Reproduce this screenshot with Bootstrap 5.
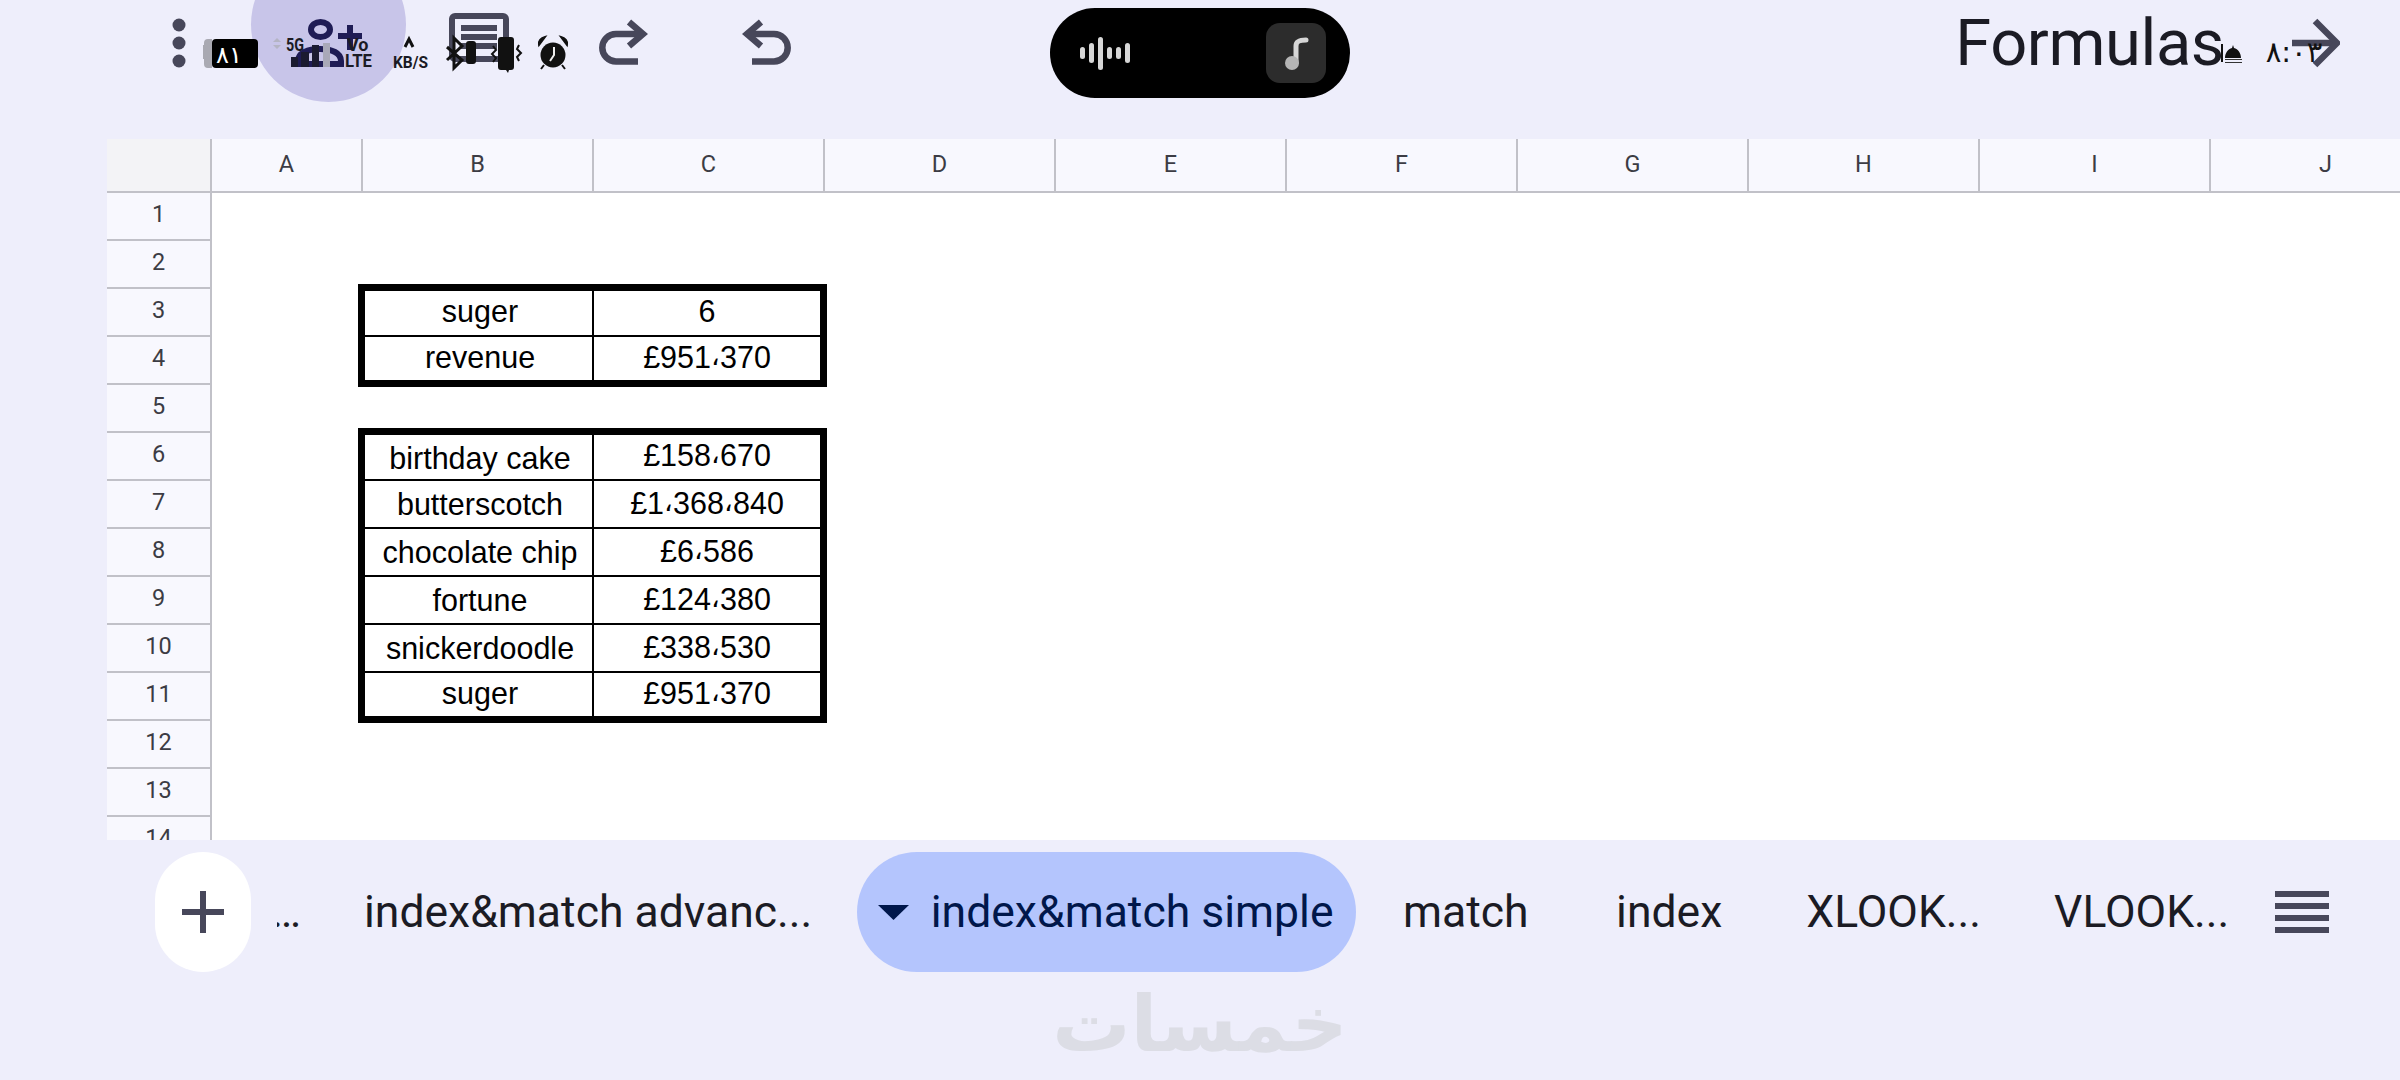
<!DOCTYPE html>
<html lang="en">
<head>
  <meta charset="UTF-8" />
  <title>Formulas</title>
  <link href="https://cdn.jsdelivr.net/npm/bootstrap@5.3.0/dist/css/bootstrap.min.css" rel="stylesheet">
  <style>
    body {
      width: 2400px;
      height: 1080px;
      overflow: hidden;
      background-color: #eeeefb;
      font-family: Roboto, sans-serif;
      color: #1b1b24;
    }

    /* top bar */
    .top-bar {
      height: 139px;
      padding-left: 107px;
    }
    .tool-btn {
      --bs-btn-padding-x: 0;
      --bs-btn-padding-y: 0;
      --bs-btn-border-width: 0;
      --bs-btn-border-radius: 0;
      display: block;
      position: relative;
      line-height: 0;
    }
    .tool-btn svg { position: relative; display: block; }
    .forward-btn { margin-right: 60px; }
    .ripple-spot {
      position: absolute;
      left: 0;
      top: -53px;
      width: 155px;
      height: 155px;
      border-radius: 50%;
      background-color: #c8c5e9;
    }
    .sheet-title {
      margin: 0 68px 0 auto;
      padding-top: 5px;
      font-size: 65px;
      line-height: 76px;
      letter-spacing: -.4px;
      font-weight: 400;
    }
    .phone-status { position: absolute; top: 0; }
    .phone-status text { font-family: Roboto, "DejaVu Sans", sans-serif; font-weight: 700; }
    .phone-status text.battery-level { font-weight: 400; }
    .status-left { left: 200px; }
    .status-right { left: 2215px; }
    .status-right text { font-family: "DejaVu Sans", sans-serif; font-weight: 400; }
    .media-pill {
      position: absolute;
      left: 1050px;
      top: 8px;
      width: 300px;
      height: 90px;
      border-radius: 45px;
      background-color: #000;
    }
    .wave-bars { gap: 4px; padding-left: 30px; }
    .wave-bars i { display: block; width: 5px; border-radius: 3px; background-color: #d6d6d6; }
    .wave-s { height: 12px; }
    .wave-m { height: 20px; }
    .wave-l { height: 33px; }
    .note-tile {
      width: 60px;
      height: 60px;
      margin-right: 24px;
      border-radius: 14px;
      background-color: #2c2c2c;
    }

    /* sheet */
    .sheet-area {
      height: 701px;
      margin-left: 107px;
      overflow: hidden;
      background-color: #fff;
    }
    .col-heads {
      height: 54px;
      background-color: #f8f8fe;
      border-bottom: 2px solid #c1c1c8;
    }
    .corner-cell {
      flex: 0 0 105px;
      background-color: #f3f3f6;
      border-right: 2px solid #c1c1c8;
    }
    .col-cell {
      flex: 0 0 231px;
      border-right: 2px solid #c1c1c8;
      font-size: 23.5px;
      color: #3c3c44;
    }
    .col-cell.first-col { flex-basis: 151px; }
    .row-rail { flex: 0 0 105px; background-color: #f8f8fe; border-right: 2px solid #c1c1c8; }
    .rail-cell {
      height: 48px;
      flex: none;
      padding-bottom: 3px;
      border-bottom: 2px solid #c1c1c8;
      font-size: 23.5px;
      color: #3c3c44;
    }
    .sheet-canvas { padding: 91px 0 0 146px; }
    .data-table {
      --bs-table-bg: transparent;
      width: 469px;
      margin: 0 0 41px;
      table-layout: fixed;
      border-collapse: separate;
      border-spacing: 0;
      border: 7px solid #000;
      font-family: "Liberation Sans", Arial, sans-serif;
      font-size: 30.5px;
      line-height: 36.6px;
      color: #000;
      text-align: center;
    }
    .data-table > tbody > tr > td {
      height: 48px;
      padding: 3.5px 0 0;
      vertical-align: top;
      border: 0;
      border-bottom: 2px solid #000;
      box-shadow: none;
    }
    .data-table > tbody > tr:first-child > td { height: 46px; }
    .data-table > tbody > tr:last-child > td { height: 43px; border-bottom: 0; }
    .data-table > tbody > tr > td.name-cell { width: 229px; padding-top: 5px; padding-left: 3px; border-right: 2px solid #000; }
    .data-table > tbody > tr > td.tight-cell { padding-top: 1.5px; }
    .ar-comma { font-size: 27px; position: relative; top: -3px; }

    /* sheet tabs */
    .tab-bar { height: 120px; margin-top: 12px; padding-left: 155px; font-size: 44.5px; }
    .add-sheet {
      --bs-btn-padding-x: 0;
      --bs-btn-padding-y: 0;
      --bs-btn-border-width: 0;
      --bs-btn-bg: #fff;
      flex: 0 0 96px;
      height: 120px;
    }
    .tab-item { padding: 0; color: #1b1b24; white-space: nowrap; line-height: 120px; }
    .tab-cut { margin-left: 26px; width: 24px; overflow: hidden; direction: rtl; }
    .tab-advanced { margin-left: 63px; }
    .tab-active {
      margin-left: 44.5px;
      padding: 0 23px 0 21px;
      gap: 22px;
      background-color: #b4c5fd;
      color: #00174b;
    }
    .tab-match { margin-left: 46.5px; }
    .tab-index { margin-left: 87.5px; }
    .tab-xlook { margin-left: 84px; }
    .tab-vlook { margin-left: 73px; }
    .all-sheets { margin-left: 46px; width: 54px; gap: 6px; }
    .all-sheets i { display: block; height: 6px; background-color: #47475a; }
    .brand-mark {
      margin-top: 12px;
      font-family: "DejaVu Sans", sans-serif;
      font-weight: 700;
      font-size: 78px;
      line-height: 80px;
      color: #dcdde5;
    }
  </style>
</head>
<body class="m-0 position-relative">
  <header class="top-bar d-flex align-items-start">
    <button class="btn tool-btn" aria-label="More">
      <svg width="144" height="86" viewBox="107 0 144 86" fill="#47475a"><circle cx="179" cy="25" r="6.5"/><circle cx="179" cy="43" r="6.5"/><circle cx="179" cy="61" r="6.5"/></svg>
    </button>
    <button class="btn tool-btn" aria-label="Add person">
      <span class="ripple-spot"></span>
      <svg width="156" height="86" viewBox="251 0 156 86" fill="none" stroke="#1f1c55" stroke-width="6">
        <ellipse cx="320.500" cy="29.500" rx="9.500" ry="7.500"/>
        <path d="M298 64v-3c0-8 10-12 22-12s21 4 21 12v3h-43z"/>
        <path d="M338 36h24M350 25v25"/>
      </svg>
    </button>
    <button class="btn tool-btn" aria-label="Comments">
      <svg width="144" height="86" viewBox="407 0 144 86" fill="none" stroke="#47475a" stroke-width="6">
        <path d="M456 59h-1a3 3 0 0 1-3-3V19a3 3 0 0 1 3-3h48a3 3 0 0 1 3 3v37a3 3 0 0 1-3 3z"/>
        <path d="M461 28h36M461 37h36M461 46h36"/>
      </svg>
    </button>
    <button class="btn tool-btn" aria-label="Redo">
      <svg width="144" height="86" viewBox="551 0 144 86" fill="none" stroke="#47475a" stroke-width="6.5">
        <path d="M629 22l14 12-14 12"/><path d="M643 34h-27a13.7 13.7 0 0 0 0 27.4h22"/>
      </svg>
    </button>
    <button class="btn tool-btn" aria-label="Undo">
      <svg width="144" height="86" viewBox="695 0 144 86" fill="none" stroke="#47475a" stroke-width="6.5">
        <path d="M761 22l-14 12 14 12"/><path d="M747 34h27a13.7 13.7 0 0 1 0 27.4h-22"/>
      </svg>
    </button>
    <h1 class="sheet-title">Formulas</h1>
    <button class="btn tool-btn forward-btn" aria-label="Forward">
      <svg width="48" height="86" viewBox="2292 0 48 86" fill="none" stroke="#47475a" stroke-width="6.5">
        <path d="M2292 43h45"/><path d="M2315 21l22 22-22 22"/>
      </svg>
    </button>
  </header>

  <svg class="phone-status status-left" width="380" height="80" viewBox="200 0 380 80">
    <path d="M212 39h-4a4 4 0 0 0-4 4v2h-1v14h1v5a4 4 0 0 0 4 4h4z" fill="#a9a9b2"/>
    <rect x="212" y="39" width="46" height="29" rx="4" fill="#000"/>
    <text class="battery-level" x="229" y="63" fill="#fff" font-size="24" text-anchor="middle">٨١</text>
    <path d="M277 38l4 4h-8zM277 49l-4-4h8z" fill="#b4b4c4"/>
    <text x="286" y="51" font-size="19" textLength="18" lengthAdjust="spacingAndGlyphs" fill="#1b1b24">5G</text>
    <path d="M291 57h7v10h-7zM301 52h8v15h-8zM312 45h7v22h-7z" fill="#1b1b30"/>
    <rect x="323" y="43" width="7" height="24" fill="#a9a9b8"/>
    <text x="347" y="51" font-size="18" fill="#1b1b24">Vo</text>
    <text x="345" y="67" font-size="18" textLength="27" lengthAdjust="spacingAndGlyphs" fill="#1b1b24">LTE</text>
    <path d="M405 47l4-8 4 8" fill="none" stroke="#111" stroke-width="3"/>
    <text x="393" y="68" font-size="16" textLength="35" lengthAdjust="spacingAndGlyphs" fill="#1b1b24">KB/S</text>
    <path d="M447 47l15 13-8 8V38l8 8-15 14" fill="none" stroke="#111" stroke-width="3"/>
    <rect x="466" y="41" width="10" height="23" rx="3" fill="#111"/>
    <path d="M493 46l3 4-4 4 4 4-3 4M519 45l-2 4 4 4-4 4 2 4" fill="none" stroke="#111" stroke-width="2"/>
    <path d="M501 37h10a3 3 0 0 1 3 3v27a3 3 0 0 1-3 3h-2l-1 3-2-3h-5a3 3 0 0 1-3-3V40a3 3 0 0 1 3-3z" fill="#111"/>
    <circle cx="553" cy="55" r="12.5" fill="#111"/>
    <path d="M539 45c-1-4 2-7 6-8zM567 45c1-4-2-7-6-8zM544 65l-3 4M562 65l3 4" fill="#111" stroke="#111" stroke-width="2"/>
    <path d="M554 47v8l-4 6" fill="none" stroke="#eee" stroke-width="2"/>
  </svg>

  <div class="media-pill d-flex align-items-center justify-content-between">
    <div class="wave-bars d-flex align-items-center">
      <i class="wave-s"></i><i class="wave-m"></i><i class="wave-l"></i><i class="wave-s"></i><i class="wave-s"></i><i class="wave-m"></i>
    </div>
    <div class="note-tile d-flex align-items-center justify-content-center">
      <svg width="60" height="60" viewBox="1266 23 60 60">
        <path d="M1306 40c-6 0-10 1-10 6v17" fill="none" stroke="#d6d6d6" stroke-width="5" stroke-linecap="round"/>
        <circle cx="1292" cy="63" r="7" fill="#b5b5b5"/>
      </svg>
    </div>
  </div>

  <svg class="phone-status status-right" width="110" height="80" viewBox="2215 0 110 80">
    <path d="M2233 45l1 3c4 1 7 5 7 10h-16c0-5 3-9 7-10z" fill="#111"/>
    <path d="M2222 44v18" stroke="#111" stroke-width="2"/>
    <path d="M2225 59.500h17M2225 62.500h17" stroke="#333" stroke-width="1"/>
    <text x="2294" y="62" font-size="29" text-anchor="middle" direction="ltr" fill="#111">٨:٠٣</text>
  </svg>

  <main class="sheet-area">
    <div class="col-heads d-flex">
      <div class="corner-cell"></div>
      <div class="col-cell first-col d-flex align-items-center justify-content-center">A</div>
      <div class="col-cell d-flex align-items-center justify-content-center">B</div>
      <div class="col-cell d-flex align-items-center justify-content-center">C</div>
      <div class="col-cell d-flex align-items-center justify-content-center">D</div>
      <div class="col-cell d-flex align-items-center justify-content-center">E</div>
      <div class="col-cell d-flex align-items-center justify-content-center">F</div>
      <div class="col-cell d-flex align-items-center justify-content-center">G</div>
      <div class="col-cell d-flex align-items-center justify-content-center">H</div>
      <div class="col-cell d-flex align-items-center justify-content-center">I</div>
      <div class="col-cell d-flex align-items-center justify-content-center">J</div>
    </div>
    <div class="d-flex">
      <div class="row-rail d-flex flex-column">
        <div class="rail-cell d-flex align-items-center justify-content-center">1</div>
        <div class="rail-cell d-flex align-items-center justify-content-center">2</div>
        <div class="rail-cell d-flex align-items-center justify-content-center">3</div>
        <div class="rail-cell d-flex align-items-center justify-content-center">4</div>
        <div class="rail-cell d-flex align-items-center justify-content-center">5</div>
        <div class="rail-cell d-flex align-items-center justify-content-center">6</div>
        <div class="rail-cell d-flex align-items-center justify-content-center">7</div>
        <div class="rail-cell d-flex align-items-center justify-content-center">8</div>
        <div class="rail-cell d-flex align-items-center justify-content-center">9</div>
        <div class="rail-cell d-flex align-items-center justify-content-center">10</div>
        <div class="rail-cell d-flex align-items-center justify-content-center">11</div>
        <div class="rail-cell d-flex align-items-center justify-content-center">12</div>
        <div class="rail-cell d-flex align-items-center justify-content-center">13</div>
        <div class="rail-cell d-flex align-items-center justify-content-center">14</div>
      </div>
      <div class="sheet-canvas">
        <table class="table data-table">
          <tbody>
            <tr><td class="name-cell tight-cell">suger</td><td class="tight-cell">6</td></tr>
            <tr><td class="name-cell tight-cell">revenue</td><td class="tight-cell">£951<span class="ar-comma">،</span>370</td></tr>
          </tbody>
        </table>
        <table class="table data-table">
          <tbody>
            <tr><td class="name-cell">birthday cake</td><td class="tight-cell">£158<span class="ar-comma">،</span>670</td></tr>
            <tr><td class="name-cell">butterscotch</td><td>£1<span class="ar-comma">،</span>368<span class="ar-comma">،</span>840</td></tr>
            <tr><td class="name-cell">chocolate chip</td><td>£6<span class="ar-comma">،</span>586</td></tr>
            <tr><td class="name-cell">fortune</td><td>£124<span class="ar-comma">،</span>380</td></tr>
            <tr><td class="name-cell">snickerdoodle</td><td>£338<span class="ar-comma">،</span>530</td></tr>
            <tr><td class="name-cell tight-cell">suger</td><td class="tight-cell">£951<span class="ar-comma">،</span>370</td></tr>
          </tbody>
        </table>
      </div>
    </div>
  </main>

  <footer>
    <nav class="tab-bar d-flex align-items-center">
      <button class="btn add-sheet rounded-pill d-flex align-items-center justify-content-center" aria-label="Add sheet">
        <svg width="42" height="42" viewBox="0 0 42 42" fill="none" stroke="#47475a" stroke-width="6"><path d="M0 21h42M21 0v42"/></svg>
      </button>
      <span class="tab-item tab-cut">…</span>
      <span class="tab-item tab-advanced">index&amp;match advanc...</span>
      <span class="tab-item tab-active rounded-pill d-flex align-items-center">
        <svg width="31" height="15" viewBox="0 0 31 15" fill="#00174b"><path d="M0 0h31L15.500 15z"/></svg>
        index&amp;match simple
      </span>
      <span class="tab-item tab-match">match</span>
      <span class="tab-item tab-index">index</span>
      <span class="tab-item tab-xlook">XLOOK...</span>
      <span class="tab-item tab-vlook">VLOOK...</span>
      <span class="all-sheets d-flex flex-column" aria-label="All sheets"><i></i><i></i><i></i><i></i></span>
    </nav>
    <div class="brand-mark text-center" dir="rtl">خمسات</div>
  </footer>

  <script src="https://cdn.jsdelivr.net/npm/bootstrap@5.3.0/dist/js/bootstrap.bundle.min.js"></script>
</body>
</html>
